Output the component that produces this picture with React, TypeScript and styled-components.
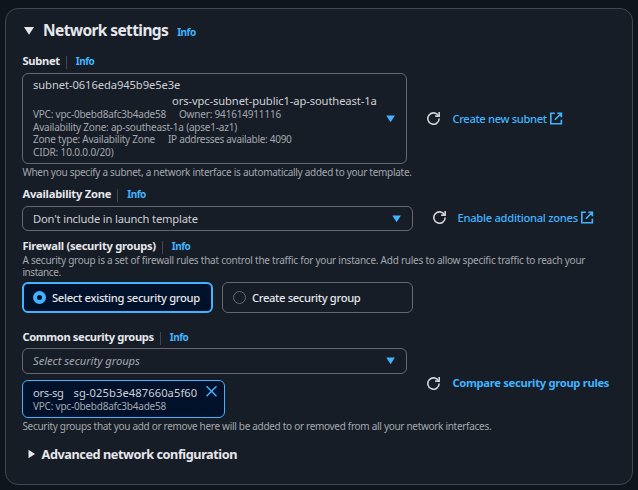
import React from 'react';
import styled, { createGlobalStyle, css } from 'styled-components';

const color = {
  page: '#0f151c',
  panel: '#161d26',
  border: '#424650',
  field: '#656871',
  heading: '#e6e7ec',
  text: '#ced0d5',
  muted: '#a4a7ae',
  link: '#42b4ff',
  selected: '#001129',
};

const GlobalStyle = createGlobalStyle`
  * { box-sizing: border-box; }
  body {
    margin: 0;
    background: ${color.page};
    color: ${color.text};
    font-family: 'Noto Sans', 'Open Sans', sans-serif;
    font-size: 11.2px;
  }
`;

const Page = styled.main`
  width: 638px;
  height: 490px;
  padding: 8px 5px 5px;
`;

const Panel = styled.section`
  height: 477px;
  padding: 11px 16px 0;
  border: 1px solid ${color.border};
  border-radius: 13px;
  background: ${color.panel};
`;

type Spacing = { $track?: number };
const tracking = css<Spacing>`
  letter-spacing: ${({ $track = 0 }) => $track}px;
  white-space: nowrap;
`;

const TitleBar = styled.header`
  display: flex;
  align-items: center;
  height: 20px;
`;

const Title = styled.h2<Spacing>`
  margin: 0 9px 0 9px;
  font-size: 15.5px;
  line-height: 20px;
  color: ${color.heading};
  ${tracking}
`;

const InfoLink = styled.a<{ $low?: boolean }>`
  font-size: 10px;
  font-weight: 700;
  line-height: 14px;
  letter-spacing: -0.5px;
  color: ${color.link};
  padding-top: ${({ $low }) => ($low ? 4 : 0)}px;
`;

const FieldLabel = styled.div<{ $gap: number }>`
  display: flex;
  align-items: baseline;
  height: 14px;
  margin-top: ${({ $gap }) => $gap}px;
`;

const LabelText = styled.label<Spacing>`
  font-weight: 700;
  line-height: 14px;
  padding-left: 0.4px;
  color: ${color.heading};
  ${tracking}
`;

const Divider = styled.span`
  align-self: flex-start;
  width: 1px;
  height: 13px;
  margin: 2px 9px 0 6px;
  background: ${color.border};
`;

const FieldRow = styled.div<{ $gap: number; $width: number }>`
  display: grid;
  grid-template-columns: ${({ $width }) => $width}px 1fr;
  column-gap: 20px;
  align-items: center;
  margin-top: ${({ $gap }) => $gap}px;
`;

const SelectBox = styled.div<{ $height: number }>`
  display: flex;
  align-items: center;
  justify-content: space-between;
  height: ${({ $height }) => $height}px;
  padding: 0 11px 0 10px;
  border: 1px solid ${color.field};
  border-radius: 6px;
`;

const Value = styled.span<Spacing & { $placeholder?: boolean }>`
  line-height: 16px;
  font-style: ${({ $placeholder }) => ($placeholder ? 'italic' : 'normal')};
  color: ${({ $placeholder }) => ($placeholder ? color.muted : color.text)};
  ${tracking}
`;

const OptionBody = styled.div`
  display: flex;
  flex-direction: column;
  align-self: flex-start;
  padding-top: 3px;
`;

const OptionTitle = styled.span<Spacing & { $indent?: number }>`
  line-height: 16px;
  height: ${({ $indent }) => ($indent ? 15.3 : 16)}px;
  padding-left: ${({ $indent = 0 }) => $indent}px;
  ${tracking}
`;

const OptionLine = styled.div`
  display: flex;
  gap: 13px;
  height: 12.6px;
  font-size: 10px;
  line-height: 12.6px;
  color: ${color.muted};
`;

const Tag = styled.span<Spacing>`
  ${tracking}
`;

const Hint = styled.div<Spacing>`
  height: 15px;
  padding: 1px 0 0 0.4px;
  font-size: 10px;
  line-height: 14px;
  color: ${color.muted};
  ${tracking}
`;

const Description = styled.div`
  padding: 0.5px 0 0 0.4px;
  font-size: 10px;
  line-height: 12px;
  color: ${color.muted};
`;

const DescriptionLine = styled.div<Spacing>`
  ${tracking}
`;

const Actions = styled.div<{ $gap?: number; $lift?: boolean }>`
  display: flex;
  align-items: center;
  gap: ${({ $gap = 12.4 }) => $gap}px;
  padding-bottom: ${({ $lift }) => ($lift ? 2 : 0)}px;
`;

const ActionLink = styled.a<Spacing & { $strong?: boolean }>`
  display: flex;
  align-items: center;
  gap: 3.5px;
  font-weight: ${({ $strong }) => ($strong ? 700 : 500)};
  line-height: 16px;
  color: ${color.link};
  ${tracking}
`;

const Tiles = styled.div`
  display: grid;
  grid-template-columns: 191px 191px;
  gap: 9px;
  margin-top: 4.5px;
`;

const Tile = styled.div<{ $selected?: boolean }>`
  display: flex;
  align-items: center;
  gap: 6px;
  height: 31px;
  padding-left: ${({ $selected }) => ($selected ? 9 : 10)}px;
  border: ${({ $selected }) => ($selected ? `2px solid ${color.link}` : `1px solid ${color.field}`)};
  border-radius: 6px;
  background: ${({ $selected }) => ($selected ? color.selected : 'transparent')};
`;

const Radio = styled.span<{ $selected?: boolean }>`
  width: 13px;
  height: 13px;
  border-radius: 50%;
  border: ${({ $selected }) => ($selected ? `4px solid ${color.link}` : `1px solid ${color.field}`)};
`;

const TileText = styled.span<Spacing>`
  font-weight: 500;
  line-height: 16px;
  color: ${color.heading};
  ${tracking}
`;

const Token = styled.div`
  display: flex;
  justify-content: space-between;
  width: 203px;
  height: 38px;
  margin-top: 6px;
  padding: 4px 7px 0 10px;
  border: 1px solid ${color.link};
  border-radius: 6px;
  background: ${color.selected};
`;

const TokenBody = styled.div`
  display: flex;
  flex-direction: column;
`;

const TokenName = styled.div`
  display: flex;
  gap: 10px;
  height: 15px;
`;

const Expander = styled.div`
  display: flex;
  align-items: center;
  height: 18px;
  margin-top: 12px;
  padding-left: 6px;
`;

const ExpanderTitle = styled.h3<Spacing>`
  margin: 0 0 0 6.6px;
  font-size: 12.7px;
  line-height: 18px;
  color: ${color.heading};
  ${tracking}
`;

const Svg = styled.svg`
  display: block;
  flex: none;
`;

const TitleCaret = () => (
  <Svg width="12" height="10" viewBox="0 0 12 10">
    <path d="M2 2h10L7 9.8z" fill={color.heading} />
  </Svg>
);

const RightCaret = () => (
  <Svg width="7" height="10" viewBox="0 0 7 10">
    <path d="M.5.8v8.4L7 5z" fill={color.heading} />
  </Svg>
);

const SelectCaret = () => (
  <Svg width="9" height="8" viewBox="0 0 9 8">
    <path d="M.3.5h8.6L4.6 7.3z" fill={color.link} />
  </Svg>
);

const RefreshIcon = () => (
  <Svg width="13" height="13" viewBox="0 0 16 16" fill="none" stroke={color.text} strokeWidth="2">
    <path d="M10 5h5V0" />
    <path d="M15 8a7 7 0 1 1-.7-3" />
  </Svg>
);

const ExternalIcon = () => (
  <Svg width="13" height="13" viewBox="1 0.5 16 16" fill="none" stroke={color.link} strokeWidth="2">
    <path d="M10 2h5v5M7 10l8-8M15 10v5H2V2h5" />
  </Svg>
);

const CloseIcon = () => (
  <Svg width="11" height="12" viewBox="0 0 11 12" fill="none" stroke={color.link} strokeWidth="1.5">
    <path d="M.5 1.2l10 10M10.5 1.2l-10 10" />
  </Svg>
);

const Label = ({ text, track, gap }: { text: string; track: number; gap: number }) => (
  <FieldLabel $gap={gap}>
    <LabelText $track={track}>{text}</LabelText>
    <Divider />
    <InfoLink>Info</InfoLink>
  </FieldLabel>
);

export default function App() {
  return (
    <Page>
      <GlobalStyle />
      <Panel>
        <TitleBar>
          <TitleCaret />
          <Title $track={-0.604}>Network settings</Title>
          <InfoLink $low>Info</InfoLink>
        </TitleBar>

        <Label text="Subnet" track={-0.31} gap={14} />
        <FieldRow $gap={5} $width={385}>
          <SelectBox $height={91}>
            <OptionBody>
              <OptionTitle $track={-0.083}>subnet-0616eda945b9e5e3e</OptionTitle>
              <OptionTitle $track={-0.108} $indent={139}>
                ors-vpc-subnet-public1-ap-southeast-1a
              </OptionTitle>
              <OptionLine>
                <Tag $track={-0.22}>VPC: vpc-0bebd8afc3b4ade58</Tag>
                <Tag $track={-0.187}>Owner: 941614911116</Tag>
              </OptionLine>
              <OptionLine>
                <Tag $track={-0.21}>Availability Zone: ap-southeast-1a (apse1-az1)</Tag>
              </OptionLine>
              <OptionLine>
                <Tag $track={-0.237}>Zone type: Availability Zone</Tag>
                <Tag $track={-0.294}>IP addresses available: 4090</Tag>
              </OptionLine>
              <OptionLine>
                <Tag $track={-0.156}>CIDR: 10.0.0.0/20)</Tag>
              </OptionLine>
            </OptionBody>
            <SelectCaret />
          </SelectBox>
          <Actions>
            <RefreshIcon />
            <ActionLink $track={-0.347}>
              Create new subnet
              <ExternalIcon />
            </ActionLink>
          </Actions>
        </FieldRow>
        <Hint $track={-0.286}>
          When you specify a subnet, a network interface is automatically added to your template.
        </Hint>

        <Label text="Availability Zone" track={-0.236} gap={8} />
        <FieldRow $gap={5} $width={391}>
          <SelectBox $height={25}>
            <Value $track={-0.173}>Don't include in launch template</Value>
            <SelectCaret />
          </SelectBox>
          <Actions $gap={11.5} $lift>
            <RefreshIcon />
            <ActionLink $track={-0.28}>
              Enable additional zones
              <ExternalIcon />
            </ActionLink>
          </Actions>
        </FieldRow>

        <Label text="Firewall (security groups)" track={-0.285} gap={8} />
        <Description>
          <DescriptionLine $track={-0.24}>
            A security group is a set of firewall rules that control the traffic for your instance. Add rules to allow
            specific traffic to reach your
          </DescriptionLine>
          <DescriptionLine $track={-0.42}>instance.</DescriptionLine>
        </Description>
        <Tiles>
          <Tile $selected>
            <Radio $selected />
            <TileText $track={-0.307}>Select existing security group</TileText>
          </Tile>
          <Tile>
            <Radio />
            <TileText $track={-0.338}>Create security group</TileText>
          </Tile>
        </Tiles>

        <Label text="Common security groups" track={-0.384} gap={17} />
        <FieldRow $gap={4} $width={385}>
          <div>
            <SelectBox $height={26}>
              <Value $placeholder $track={-0.02}>
                Select security groups
              </Value>
              <SelectCaret />
            </SelectBox>
            <Token>
              <TokenBody>
                <TokenName>
                  <Value $track={-0.354}>ors-sg</Value>
                  <Value $track={0.075}>sg-025b3e487660a5f60</Value>
                </TokenName>
                <OptionLine>
                  <Tag $track={-0.22}>VPC: vpc-0bebd8afc3b4ade58</Tag>
                </OptionLine>
              </TokenBody>
              <CloseIcon />
            </Token>
          </div>
          <Actions>
            <RefreshIcon />
            <ActionLink $strong $track={-0.295}>
              Compare security group rules
            </ActionLink>
          </Actions>
        </FieldRow>
        <Hint $track={-0.3}>
          Security groups that you add or remove here will be added to or removed from all your network interfaces.
        </Hint>

        <Expander>
          <RightCaret />
          <ExpanderTitle $track={-0.435}>Advanced network configuration</ExpanderTitle>
        </Expander>
      </Panel>
    </Page>
  );
}
